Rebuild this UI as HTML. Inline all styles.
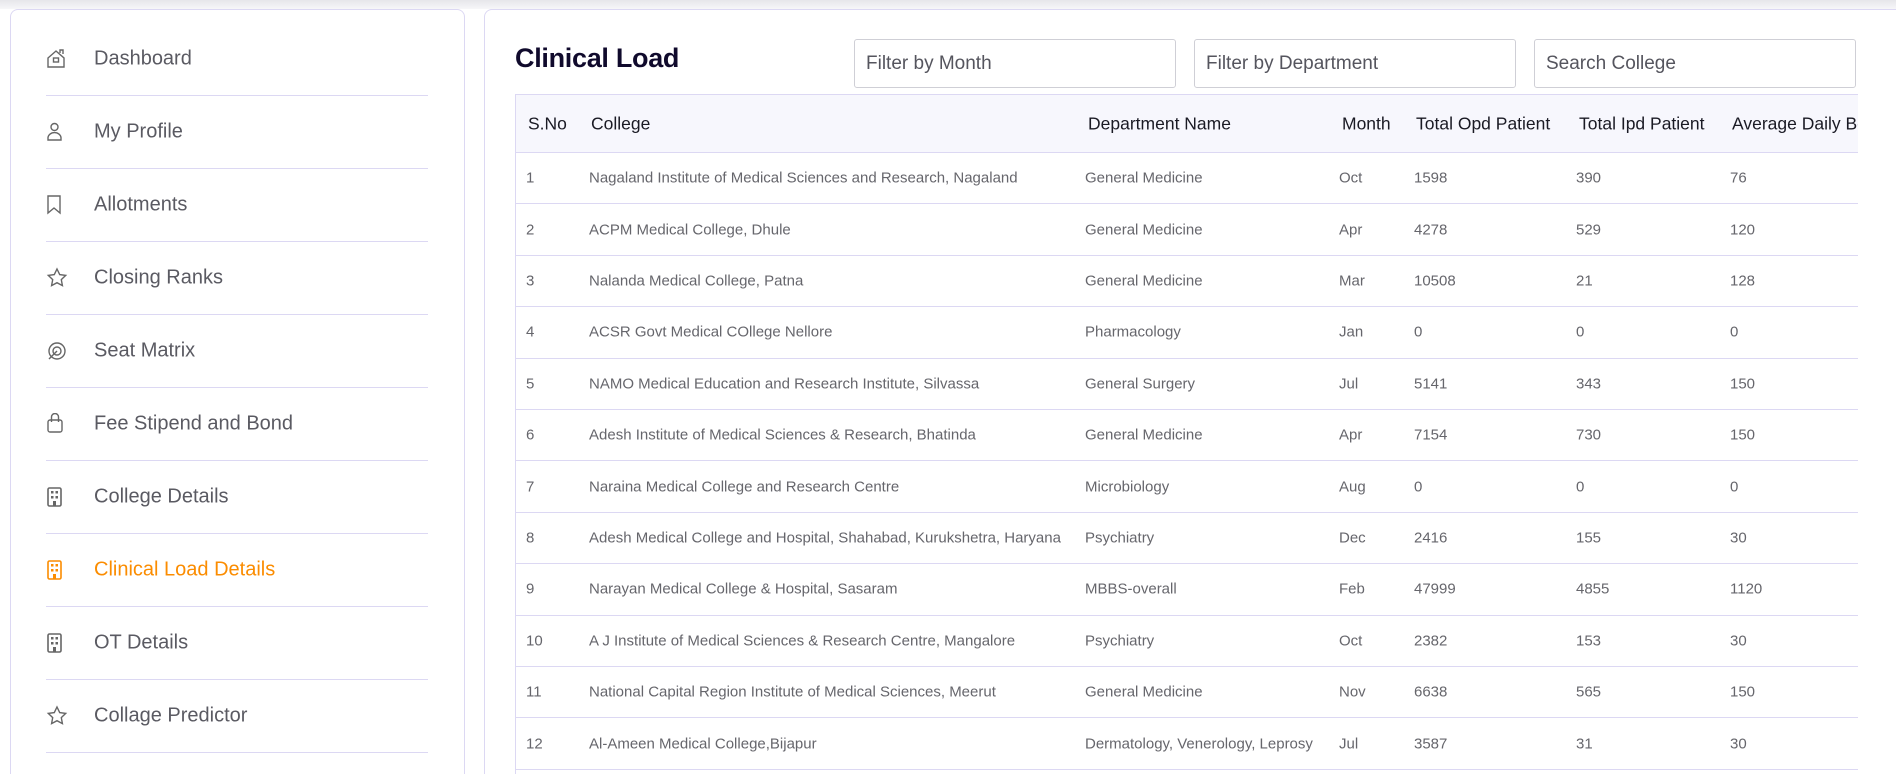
<!DOCTYPE html>
<html><head><meta charset="utf-8"><style>
*{margin:0;padding:0;box-sizing:border-box}
html,body{width:1896px;height:774px;overflow:hidden}
body{background:#fff;font-family:"Liberation Sans",sans-serif;position:relative}
.topbar{position:absolute;left:0;top:0;width:1896px;height:9px;background:linear-gradient(#e6e6ea,#f7f7f9)}
.side{position:absolute;left:10px;top:9px;width:455px;height:765px;border:1px solid #dcd8f3;border-bottom:none;border-radius:8px 8px 0 0;background:#fff;overflow:hidden}
.item{position:absolute;left:35px;width:382px;height:73px;border-bottom:1px solid #dcd8f3}
.item span{position:absolute;left:48px;top:50%;transform:translateY(-50%);font-size:20px;color:#5a5a62}
.item svg{position:absolute;left:0;top:50%;transform:translateY(-50%)}
.item.act span{color:#fb8c00}
.main{position:absolute;left:484px;top:9px;width:1412px;height:765px;border:1px solid #dcd8f3;border-bottom:none;border-right:none;border-radius:8px 0 0 0;background:#fff;overflow:hidden}
h1{position:absolute;left:30px;top:33px;font-size:27px;font-weight:bold;color:#100a2c;letter-spacing:-0.3px}
.inp{position:absolute;top:29px;height:49px;width:322px;border:1px solid #cfcfd6;border-radius:3px;font-size:19px;color:#55555e;padding:13px 0 0 11px}
.tbl{position:absolute;left:30px;top:84px;width:1343px;height:681px;border-left:1px solid #dcd8f3;overflow:hidden}
.hd{position:absolute;left:0;top:0;width:1343px;height:59px;background:#f7f7fd;border-top:1px solid #dcd8f3;border-bottom:1px solid #dcd8f3}
.r{position:absolute;left:0;width:1343px;height:51.4px;border-bottom:1px solid #dcd8f3}
.c{position:absolute;top:50%;transform:translateY(-50%);white-space:nowrap}
.hd .c{font-size:17.5px;color:#1a1a24}
.r .c{font-size:15px;color:#66666c}
</style></head><body>
<div class="topbar"></div>
<div class="side">
<div class="item" style="top:13px"><svg width="22" height="22" viewBox="0 0 22 22" fill="none" stroke="#666" stroke-width="1.4"><path d="M2 10L10 3l8 7v9H2z"/><rect x="7.5" y="10" width="5" height="4"/><path d="M14 5V2h3v4"/></svg><span>Dashboard</span></div>
<div class="item" style="top:86px"><svg width="22" height="22" viewBox="0 0 22 22" fill="none" stroke="#666" stroke-width="1.4"><circle cx="8.5" cy="6" r="3.5"/><path d="M2 19v-2a6 5 0 0 1 13 0v2z"/></svg><span>My Profile</span></div>
<div class="item" style="top:159px"><svg width="22" height="22" viewBox="0 0 22 22" fill="none" stroke="#666" stroke-width="1.4"><path d="M2 2h12v17l-6-5-6 5z"/></svg><span>Allotments</span></div>
<div class="item" style="top:232px"><svg width="22" height="22" viewBox="0 0 22 22" fill="none" stroke="#666" stroke-width="1.4"><path d="M11 2l2.7 5.6 6 .8-4.4 4.2 1.1 6L11 15.7l-5.4 2.9 1.1-6L2.3 8.4l6-.8z"/></svg><span>Closing Ranks</span></div>
<div class="item" style="top:305px"><svg width="22" height="22" viewBox="0 0 22 22" fill="none" stroke="#666" stroke-width="1.4"><circle cx="11" cy="11" r="8"/><circle cx="11" cy="11" r="4"/><path d="M3 19l8-8"/></svg><span>Seat Matrix</span></div>
<div class="item" style="top:378px"><svg width="22" height="22" viewBox="0 0 22 22" fill="none" stroke="#666" stroke-width="1.4"><rect x="2" y="7" width="14" height="12" rx="2"/><path d="M5.5 9V4a3.5 3.5 0 0 1 7 0v5"/></svg><span>Fee Stipend and Bond</span></div>
<div class="item" style="top:451px"><svg width="22" height="22" viewBox="0 0 22 22"><rect x="2" y="2" width="13" height="18" rx="1.5" fill="none" stroke="#666" stroke-width="1.6"/><g fill="#666"><rect x="5" y="5" width="2.5" height="2.5"/><rect x="9.5" y="5" width="2.5" height="2.5"/><rect x="5" y="10" width="2.5" height="2.5"/><rect x="9.5" y="10" width="2.5" height="2.5"/><rect x="7" y="15" width="3" height="5"/></g></svg><span>College Details</span></div>
<div class="item act" style="top:524px"><svg width="22" height="22" viewBox="0 0 22 22"><rect x="2" y="2" width="13" height="18" rx="1.5" fill="none" stroke="#fb8c00" stroke-width="1.6"/><g fill="#fb8c00"><rect x="5" y="5" width="2.5" height="2.5"/><rect x="9.5" y="5" width="2.5" height="2.5"/><rect x="5" y="10" width="2.5" height="2.5"/><rect x="9.5" y="10" width="2.5" height="2.5"/><rect x="7" y="15" width="3" height="5"/></g></svg><span>Clinical Load Details</span></div>
<div class="item" style="top:597px"><svg width="22" height="22" viewBox="0 0 22 22"><rect x="2" y="2" width="13" height="18" rx="1.5" fill="none" stroke="#666" stroke-width="1.6"/><g fill="#666"><rect x="5" y="5" width="2.5" height="2.5"/><rect x="9.5" y="5" width="2.5" height="2.5"/><rect x="5" y="10" width="2.5" height="2.5"/><rect x="9.5" y="10" width="2.5" height="2.5"/><rect x="7" y="15" width="3" height="5"/></g></svg><span>OT Details</span></div>
<div class="item" style="top:670px"><svg width="22" height="22" viewBox="0 0 22 22" fill="none" stroke="#666" stroke-width="1.4"><path d="M11 2l2.7 5.6 6 .8-4.4 4.2 1.1 6L11 15.7l-5.4 2.9 1.1-6L2.3 8.4l6-.8z"/></svg><span>Collage Predictor</span></div>
</div>
<div class="main">
<h1>Clinical Load</h1>
<div class="inp" style="left:369px">Filter by Month</div>
<div class="inp" style="left:709px">Filter by Department</div>
<div class="inp" style="left:1049px">Search College</div>
<div class="tbl">
<div class="hd"><div class="c" style="left:12px">S.No</div><div class="c" style="left:75px">College</div><div class="c" style="left:572px">Department Name</div><div class="c" style="left:826px">Month</div><div class="c" style="left:900px">Total Opd Patient</div><div class="c" style="left:1063px">Total Ipd Patient</div><div class="c" style="left:1216px">Average Daily Bed Occupancy</div></div>
<div class="r" style="top:59px"><div class="c" style="left:10px">1</div><div class="c" style="left:73px">Nagaland Institute of Medical Sciences and Research, Nagaland</div><div class="c" style="left:569px">General Medicine</div><div class="c" style="left:823px">Oct</div><div class="c" style="left:898px">1598</div><div class="c" style="left:1060px">390</div><div class="c" style="left:1214px">76</div></div>
<div class="r" style="top:110.4px"><div class="c" style="left:10px">2</div><div class="c" style="left:73px">ACPM Medical College, Dhule</div><div class="c" style="left:569px">General Medicine</div><div class="c" style="left:823px">Apr</div><div class="c" style="left:898px">4278</div><div class="c" style="left:1060px">529</div><div class="c" style="left:1214px">120</div></div>
<div class="r" style="top:161.8px"><div class="c" style="left:10px">3</div><div class="c" style="left:73px">Nalanda Medical College, Patna</div><div class="c" style="left:569px">General Medicine</div><div class="c" style="left:823px">Mar</div><div class="c" style="left:898px">10508</div><div class="c" style="left:1060px">21</div><div class="c" style="left:1214px">128</div></div>
<div class="r" style="top:213.2px"><div class="c" style="left:10px">4</div><div class="c" style="left:73px">ACSR Govt Medical COllege Nellore</div><div class="c" style="left:569px">Pharmacology</div><div class="c" style="left:823px">Jan</div><div class="c" style="left:898px">0</div><div class="c" style="left:1060px">0</div><div class="c" style="left:1214px">0</div></div>
<div class="r" style="top:264.6px"><div class="c" style="left:10px">5</div><div class="c" style="left:73px">NAMO Medical Education and Research Institute, Silvassa</div><div class="c" style="left:569px">General Surgery</div><div class="c" style="left:823px">Jul</div><div class="c" style="left:898px">5141</div><div class="c" style="left:1060px">343</div><div class="c" style="left:1214px">150</div></div>
<div class="r" style="top:316px"><div class="c" style="left:10px">6</div><div class="c" style="left:73px">Adesh Institute of Medical Sciences &amp; Research, Bhatinda</div><div class="c" style="left:569px">General Medicine</div><div class="c" style="left:823px">Apr</div><div class="c" style="left:898px">7154</div><div class="c" style="left:1060px">730</div><div class="c" style="left:1214px">150</div></div>
<div class="r" style="top:367.4px"><div class="c" style="left:10px">7</div><div class="c" style="left:73px">Naraina Medical College and Research Centre</div><div class="c" style="left:569px">Microbiology</div><div class="c" style="left:823px">Aug</div><div class="c" style="left:898px">0</div><div class="c" style="left:1060px">0</div><div class="c" style="left:1214px">0</div></div>
<div class="r" style="top:418.8px"><div class="c" style="left:10px">8</div><div class="c" style="left:73px">Adesh Medical College and Hospital, Shahabad, Kurukshetra, Haryana</div><div class="c" style="left:569px">Psychiatry</div><div class="c" style="left:823px">Dec</div><div class="c" style="left:898px">2416</div><div class="c" style="left:1060px">155</div><div class="c" style="left:1214px">30</div></div>
<div class="r" style="top:470.2px"><div class="c" style="left:10px">9</div><div class="c" style="left:73px">Narayan Medical College &amp; Hospital, Sasaram</div><div class="c" style="left:569px">MBBS-overall</div><div class="c" style="left:823px">Feb</div><div class="c" style="left:898px">47999</div><div class="c" style="left:1060px">4855</div><div class="c" style="left:1214px">1120</div></div>
<div class="r" style="top:521.6px"><div class="c" style="left:10px">10</div><div class="c" style="left:73px">A J Institute of Medical Sciences &amp; Research Centre, Mangalore</div><div class="c" style="left:569px">Psychiatry</div><div class="c" style="left:823px">Oct</div><div class="c" style="left:898px">2382</div><div class="c" style="left:1060px">153</div><div class="c" style="left:1214px">30</div></div>
<div class="r" style="top:573px"><div class="c" style="left:10px">11</div><div class="c" style="left:73px">National Capital Region Institute of Medical Sciences, Meerut</div><div class="c" style="left:569px">General Medicine</div><div class="c" style="left:823px">Nov</div><div class="c" style="left:898px">6638</div><div class="c" style="left:1060px">565</div><div class="c" style="left:1214px">150</div></div>
<div class="r" style="top:624.4px"><div class="c" style="left:10px">12</div><div class="c" style="left:73px">Al-Ameen Medical College,Bijapur</div><div class="c" style="left:569px">Dermatology, Venerology, Leprosy</div><div class="c" style="left:823px">Jul</div><div class="c" style="left:898px">3587</div><div class="c" style="left:1060px">31</div><div class="c" style="left:1214px">30</div></div>
</div>
</div>
</body></html>
